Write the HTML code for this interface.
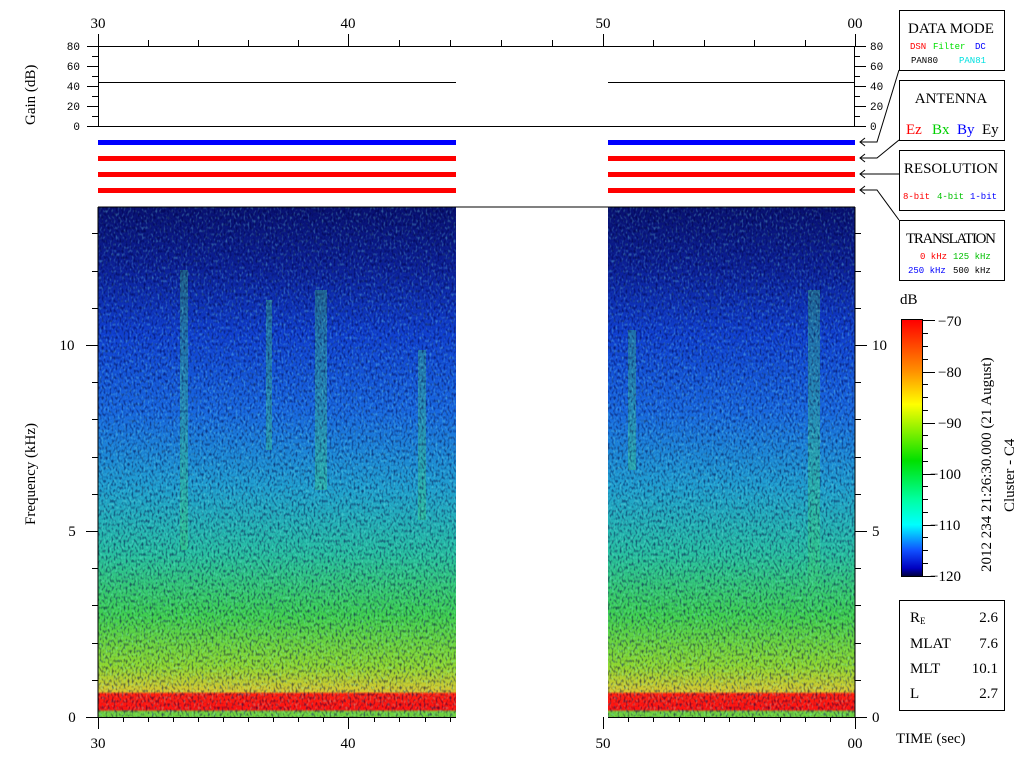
<!DOCTYPE html>
<html><head><meta charset="utf-8"><style>
html,body{margin:0;padding:0;background:#fff;width:1024px;height:768px;overflow:hidden}
svg text{font-family:"Liberation Mono","DejaVu Sans Mono",monospace}
.s{font-family:"Liberation Serif",serif}
</style></head><body>
<svg width="1024" height="768" viewBox="0 0 1024 768" xmlns="http://www.w3.org/2000/svg">
<defs>
<linearGradient id="spec" x1="0" y1="207" x2="0" y2="717" gradientUnits="userSpaceOnUse">
<stop offset="0" stop-color="#081070"/>
<stop offset="0.12" stop-color="#0c2098"/>
<stop offset="0.25" stop-color="#1040d0"/>
<stop offset="0.40" stop-color="#1868e0"/>
<stop offset="0.55" stop-color="#20a0d0"/>
<stop offset="0.68" stop-color="#28c0a0"/>
<stop offset="0.80" stop-color="#40d050"/>
<stop offset="0.90" stop-color="#90d830"/>
<stop offset="0.95" stop-color="#d8c830"/>
<stop offset="0.955" stop-color="#ff2010"/>
<stop offset="0.985" stop-color="#ff1010"/>
<stop offset="0.99" stop-color="#70d040"/>
<stop offset="1" stop-color="#70d040"/>
</linearGradient>
<linearGradient id="cb" x1="0" y1="320" x2="0" y2="576" gradientUnits="userSpaceOnUse">
<stop offset="0" stop-color="#ff0000"/>
<stop offset="0.2" stop-color="#ff9000"/>
<stop offset="0.33" stop-color="#ffff00"/>
<stop offset="0.55" stop-color="#00e000"/>
<stop offset="0.7" stop-color="#00ffa0"/>
<stop offset="0.8" stop-color="#00ffff"/>
<stop offset="0.9" stop-color="#1050ff"/>
<stop offset="0.97" stop-color="#0000c0"/>
<stop offset="1" stop-color="#000040"/>
</linearGradient>
<filter id="n" x="0" y="0" width="100%" height="100%">
<feTurbulence type="fractalNoise" baseFrequency="0.5 0.3" numOctaves="1" seed="3"/>
<feColorMatrix values="0 0 0 0 0  0 0 0 0 0  0 0 0 0 0.05  0 0 0 -3 1.6"/>
</filter>
<filter id="m" x="0" y="0" width="100%" height="100%">
<feTurbulence type="fractalNoise" baseFrequency="0.5 0.3" numOctaves="1" seed="11"/>
<feColorMatrix values="0 0 0 0 0.2  0 0 0 0 0.9  0 0 0 0 0.8  0 0 0 -3 1.5"/>
</filter>
</defs>

<!-- spectrogram -->
<rect x="98" y="207" width="358" height="510" fill="url(#spec)"/>
<rect x="608" y="207" width="247" height="510" fill="url(#spec)"/>
<g fill="#40d070" opacity="0.35">
<rect x="180" y="270" width="8" height="280"/><rect x="315" y="290" width="12" height="200"/>
<rect x="418" y="350" width="8" height="170"/><rect x="266" y="300" width="6" height="150"/>
<rect x="808" y="290" width="12" height="320"/><rect x="628" y="330" width="8" height="140"/>
</g>
<rect x="98" y="207" width="358" height="510" filter="url(#m)" opacity="0.35"/>
<rect x="608" y="207" width="247" height="510" filter="url(#m)" opacity="0.35"/>
<rect x="98" y="207" width="358" height="510" filter="url(#n)" opacity="0.55"/>
<rect x="608" y="207" width="247" height="510" filter="url(#n)" opacity="0.55"/>
<line x1="98" y1="207" x2="855" y2="207" stroke="#000"/>

<!-- gain box -->
<rect x="98.5" y="46.5" width="756" height="80" fill="none" stroke="#000"/>
<line x1="98" y1="82.5" x2="456" y2="82.5" stroke="#000"/>
<line x1="608" y1="82.5" x2="855" y2="82.5" stroke="#000"/>
<g stroke="#000">
<line x1="87" y1="46.5" x2="98" y2="46.5"/><line x1="92" y1="56.5" x2="98" y2="56.5"/>
<line x1="87" y1="66.5" x2="98" y2="66.5"/><line x1="92" y1="76.5" x2="98" y2="76.5"/>
<line x1="87" y1="86.5" x2="98" y2="86.5"/><line x1="92" y1="96.5" x2="98" y2="96.5"/>
<line x1="87" y1="106.5" x2="98" y2="106.5"/><line x1="92" y1="116.5" x2="98" y2="116.5"/>
<line x1="87" y1="126.5" x2="98" y2="126.5"/>
<line x1="855" y1="46.5" x2="866" y2="46.5"/><line x1="855" y1="56.5" x2="860" y2="56.5"/>
<line x1="855" y1="66.5" x2="866" y2="66.5"/><line x1="855" y1="76.5" x2="860" y2="76.5"/>
<line x1="855" y1="86.5" x2="866" y2="86.5"/><line x1="855" y1="96.5" x2="860" y2="96.5"/>
<line x1="855" y1="106.5" x2="866" y2="106.5"/><line x1="855" y1="116.5" x2="860" y2="116.5"/>
<line x1="855" y1="126.5" x2="866" y2="126.5"/>
</g>
<g font-size="11" text-anchor="end"><text x="80" y="50">80</text><text x="80" y="70">60</text><text x="80" y="90">40</text><text x="80" y="110">20</text><text x="80" y="130">0</text></g>
<g font-size="11"><text x="870" y="50">80</text><text x="870" y="70">60</text><text x="870" y="90">40</text><text x="870" y="110">20</text><text x="870" y="130">0</text></g>
<text class="s" font-size="15" transform="translate(35,125) rotate(-90)">Gain (dB)</text>

<!-- top time axis -->
<g stroke="#000">
<line x1="98.5" y1="34" x2="98.5" y2="46"/><line x1="148.5" y1="40" x2="148.5" y2="46"/><line x1="198.5" y1="40" x2="198.5" y2="46"/><line x1="248.5" y1="40" x2="248.5" y2="46"/><line x1="298.5" y1="40" x2="298.5" y2="46"/><line x1="348.5" y1="34" x2="348.5" y2="46"/><line x1="399.5" y1="40" x2="399.5" y2="46"/><line x1="450.5" y1="40" x2="450.5" y2="46"/><line x1="501.5" y1="40" x2="501.5" y2="46"/><line x1="552.5" y1="40" x2="552.5" y2="46"/><line x1="603.5" y1="34" x2="603.5" y2="46"/><line x1="653.5" y1="40" x2="653.5" y2="46"/><line x1="704.5" y1="40" x2="704.5" y2="46"/><line x1="754.5" y1="40" x2="754.5" y2="46"/><line x1="805.5" y1="40" x2="805.5" y2="46"/><line x1="855.5" y1="34" x2="855.5" y2="46"/>
</g>
<g class="s" font-size="15" text-anchor="middle"><text x="98" y="28" class="s">30</text><text x="348" y="28" class="s">40</text><text x="603" y="28" class="s">50</text><text x="855" y="28" class="s">00</text></g>

<!-- bars -->
<g><rect x="98" y="140" width="358" height="5" fill="#0000ff"/><rect x="608" y="140" width="247" height="5" fill="#0000ff"/>
<rect x="98" y="156" width="358" height="5" fill="#ff0000"/><rect x="608" y="156" width="247" height="5" fill="#ff0000"/>
<rect x="98" y="172" width="358" height="5" fill="#ff0000"/><rect x="608" y="172" width="247" height="5" fill="#ff0000"/>
<rect x="98" y="188" width="358" height="5" fill="#ff0000"/><rect x="608" y="188" width="247" height="5" fill="#ff0000"/></g>

<!-- arrows -->
<g stroke="#000" fill="none">
<polyline points="899,70 877,142 860,142"/><polyline points="865,138 860,142 865,146"/>
<polyline points="899,140 877,158 860,158"/><polyline points="865,154 860,158 865,162"/>
<polyline points="899,174 860,174"/><polyline points="865,170 860,174 865,178"/>
<polyline points="899,220 877,190 860,190"/><polyline points="865,186 860,190 865,194"/>
</g>

<!-- right boxes -->
<g fill="none" stroke="#000">
<rect x="899.5" y="10.5" width="105" height="60"/>
<rect x="899.5" y="80.5" width="105" height="60"/>
<rect x="899.5" y="150.5" width="105" height="60"/>
<rect x="899.5" y="220.5" width="105" height="60"/>
<rect x="899.5" y="600.5" width="105" height="110"/>
</g>
<g class="s" font-size="15" text-anchor="middle">
<text x="951" y="33" class="s">DATA MODE</text>
<text x="951" y="103" class="s">ANTENNA</text>
<text x="951" y="173" class="s">RESOLUTION</text>
<text x="951" y="243" class="s" textLength="90">TRANSLATION</text>
</g>
<g font-size="9">
<text x="910" y="49" fill="#ff0000">DSN</text><text x="933" y="49" fill="#00e000">Filter</text><text x="975" y="49" fill="#0000ff">DC</text>
<text x="911" y="63" fill="#000">PAN80</text><text x="959" y="63" fill="#00e0e0">PAN81</text>
<text x="903" y="199" fill="#ff0000">8-bit</text><text x="937" y="199" fill="#00c000">4-bit</text><text x="970" y="199" fill="#0000ff">1-bit</text>
<text x="920" y="259" fill="#ff0000">0 kHz</text><text x="953" y="259" fill="#00c000">125 kHz</text>
<text x="908" y="273" fill="#0000ff">250 kHz</text><text x="953" y="273" fill="#000">500 kHz</text>
</g>
<g class="s" font-size="15"><text x="906" y="134" fill="#ff0000" class="s">Ez</text><text x="932" y="134" fill="#00d000" class="s">Bx</text><text x="957" y="134" fill="#0000ff" class="s">By</text><text x="982" y="134" fill="#000" class="s">Ey</text></g>

<!-- colorbar -->
<rect x="902" y="320" width="20" height="256" fill="url(#cb)"/>
<rect x="901.5" y="319.5" width="21" height="257" fill="none" stroke="#000"/>
<g stroke="#000">
<line x1="922" y1="320.5" x2="935" y2="320.5"/><line x1="922" y1="333.5" x2="928" y2="333.5"/><line x1="922" y1="346.5" x2="928" y2="346.5"/><line x1="922" y1="359.5" x2="928" y2="359.5"/><line x1="922" y1="372.5" x2="935" y2="372.5"/><line x1="922" y1="384.5" x2="928" y2="384.5"/><line x1="922" y1="397.5" x2="928" y2="397.5"/><line x1="922" y1="410.5" x2="928" y2="410.5"/><line x1="922" y1="423.5" x2="935" y2="423.5"/><line x1="922" y1="435.5" x2="928" y2="435.5"/><line x1="922" y1="448.5" x2="928" y2="448.5"/><line x1="922" y1="461.5" x2="928" y2="461.5"/><line x1="922" y1="474.5" x2="935" y2="474.5"/><line x1="922" y1="486.5" x2="928" y2="486.5"/><line x1="922" y1="499.5" x2="928" y2="499.5"/><line x1="922" y1="512.5" x2="928" y2="512.5"/><line x1="922" y1="525.5" x2="935" y2="525.5"/><line x1="922" y1="537.5" x2="928" y2="537.5"/><line x1="922" y1="550.5" x2="928" y2="550.5"/><line x1="922" y1="563.5" x2="928" y2="563.5"/><line x1="922" y1="576.5" x2="935" y2="576.5"/>
</g>
<g class="s" font-size="15">
<text x="900" y="304" class="s">dB</text>
<text x="938" y="326" class="s">−70</text><text x="938" y="377" class="s">−80</text><text x="938" y="428" class="s">−90</text>
<text x="930" y="479" class="s">−100</text><text x="930" y="530" class="s">−110</text><text x="930" y="581" class="s">−120</text>
<text class="s" transform="translate(991,572) rotate(-90)">2012 234 21:26:30.000 (21 August)</text>
<text class="s" transform="translate(1014,512) rotate(-90)">Cluster - C4</text>
</g>

<!-- info -->
<g class="s" font-size="15">
<text x="910" y="622" class="s">R<tspan font-size="9" dy="2">E</tspan></text><text x="998" y="622" text-anchor="end" class="s">2.6</text>
<text x="910" y="648" class="s">MLAT</text><text x="998" y="648" text-anchor="end" class="s">7.6</text>
<text x="910" y="673" class="s">MLT</text><text x="998" y="673" text-anchor="end" class="s">10.1</text>
<text x="910" y="698" class="s">L</text><text x="998" y="698" text-anchor="end" class="s">2.7</text>
<text x="896" y="743" class="s">TIME (sec)</text>
</g>

<!-- freq axis -->
<g stroke="#000">
<line x1="98" y1="207" x2="98" y2="717"/><line x1="855" y1="207" x2="855" y2="717"/>
<line x1="86" y1="717.5" x2="98" y2="717.5"/><line x1="92" y1="680.5" x2="98" y2="680.5"/><line x1="92" y1="643.5" x2="98" y2="643.5"/><line x1="92" y1="605.5" x2="98" y2="605.5"/><line x1="92" y1="568.5" x2="98" y2="568.5"/><line x1="86" y1="531.5" x2="98" y2="531.5"/><line x1="92" y1="494.5" x2="98" y2="494.5"/><line x1="92" y1="457.5" x2="98" y2="457.5"/><line x1="92" y1="419.5" x2="98" y2="419.5"/><line x1="92" y1="382.5" x2="98" y2="382.5"/><line x1="86" y1="345.5" x2="98" y2="345.5"/><line x1="92" y1="308.5" x2="98" y2="308.5"/><line x1="92" y1="271.5" x2="98" y2="271.5"/><line x1="92" y1="233.5" x2="98" y2="233.5"/>
<line x1="855" y1="717.5" x2="867" y2="717.5"/><line x1="855" y1="680.5" x2="861" y2="680.5"/><line x1="855" y1="643.5" x2="861" y2="643.5"/><line x1="855" y1="605.5" x2="861" y2="605.5"/><line x1="855" y1="568.5" x2="861" y2="568.5"/><line x1="855" y1="531.5" x2="867" y2="531.5"/><line x1="855" y1="494.5" x2="861" y2="494.5"/><line x1="855" y1="457.5" x2="861" y2="457.5"/><line x1="855" y1="419.5" x2="861" y2="419.5"/><line x1="855" y1="382.5" x2="861" y2="382.5"/><line x1="855" y1="345.5" x2="867" y2="345.5"/><line x1="855" y1="308.5" x2="861" y2="308.5"/><line x1="855" y1="271.5" x2="861" y2="271.5"/><line x1="855" y1="233.5" x2="861" y2="233.5"/>
<line x1="98.5" y1="717" x2="98.5" y2="729"/><line x1="348.5" y1="717" x2="348.5" y2="729"/><line x1="603.5" y1="717" x2="603.5" y2="729"/><line x1="855.5" y1="717" x2="855.5" y2="729"/>
<line x1="98" y1="717.5" x2="456" y2="717.5"/><line x1="608" y1="717.5" x2="855" y2="717.5"/>
</g>
<g stroke="#000">
<line x1="123.5" y1="717" x2="123.5" y2="722"/><line x1="148.5" y1="717" x2="148.5" y2="722"/><line x1="173.5" y1="717" x2="173.5" y2="722"/><line x1="198.5" y1="717" x2="198.5" y2="722"/><line x1="223.5" y1="717" x2="223.5" y2="722"/><line x1="248.5" y1="717" x2="248.5" y2="722"/><line x1="273.5" y1="717" x2="273.5" y2="722"/><line x1="298.5" y1="717" x2="298.5" y2="722"/><line x1="323.5" y1="717" x2="323.5" y2="722"/><line x1="374.5" y1="717" x2="374.5" y2="722"/><line x1="399.5" y1="717" x2="399.5" y2="722"/><line x1="425.5" y1="717" x2="425.5" y2="722"/><line x1="450.5" y1="717" x2="450.5" y2="722"/><line x1="628.5" y1="717" x2="628.5" y2="722"/><line x1="653.5" y1="717" x2="653.5" y2="722"/><line x1="679.5" y1="717" x2="679.5" y2="722"/><line x1="704.5" y1="717" x2="704.5" y2="722"/><line x1="729.5" y1="717" x2="729.5" y2="722"/><line x1="754.5" y1="717" x2="754.5" y2="722"/><line x1="780.5" y1="717" x2="780.5" y2="722"/><line x1="805.5" y1="717" x2="805.5" y2="722"/><line x1="830.5" y1="717" x2="830.5" y2="722"/>
</g>
<g class="s" font-size="15">
<text x="72" y="722" text-anchor="middle" class="s">0</text><text x="72" y="536" text-anchor="middle" class="s">5</text><text x="67" y="350" text-anchor="middle" class="s">10</text>
<text x="872" y="722" class="s">0</text><text x="872" y="536" class="s">5</text><text x="872" y="350" class="s">10</text>
<text class="s" transform="translate(35,525) rotate(-90)">Frequency (kHz)</text>
</g>
<g class="s" font-size="15" text-anchor="middle"><text x="98" y="748" class="s">30</text><text x="348" y="748" class="s">40</text><text x="603" y="748" class="s">50</text><text x="855" y="748" class="s">00</text></g>
</svg>
</body></html>
